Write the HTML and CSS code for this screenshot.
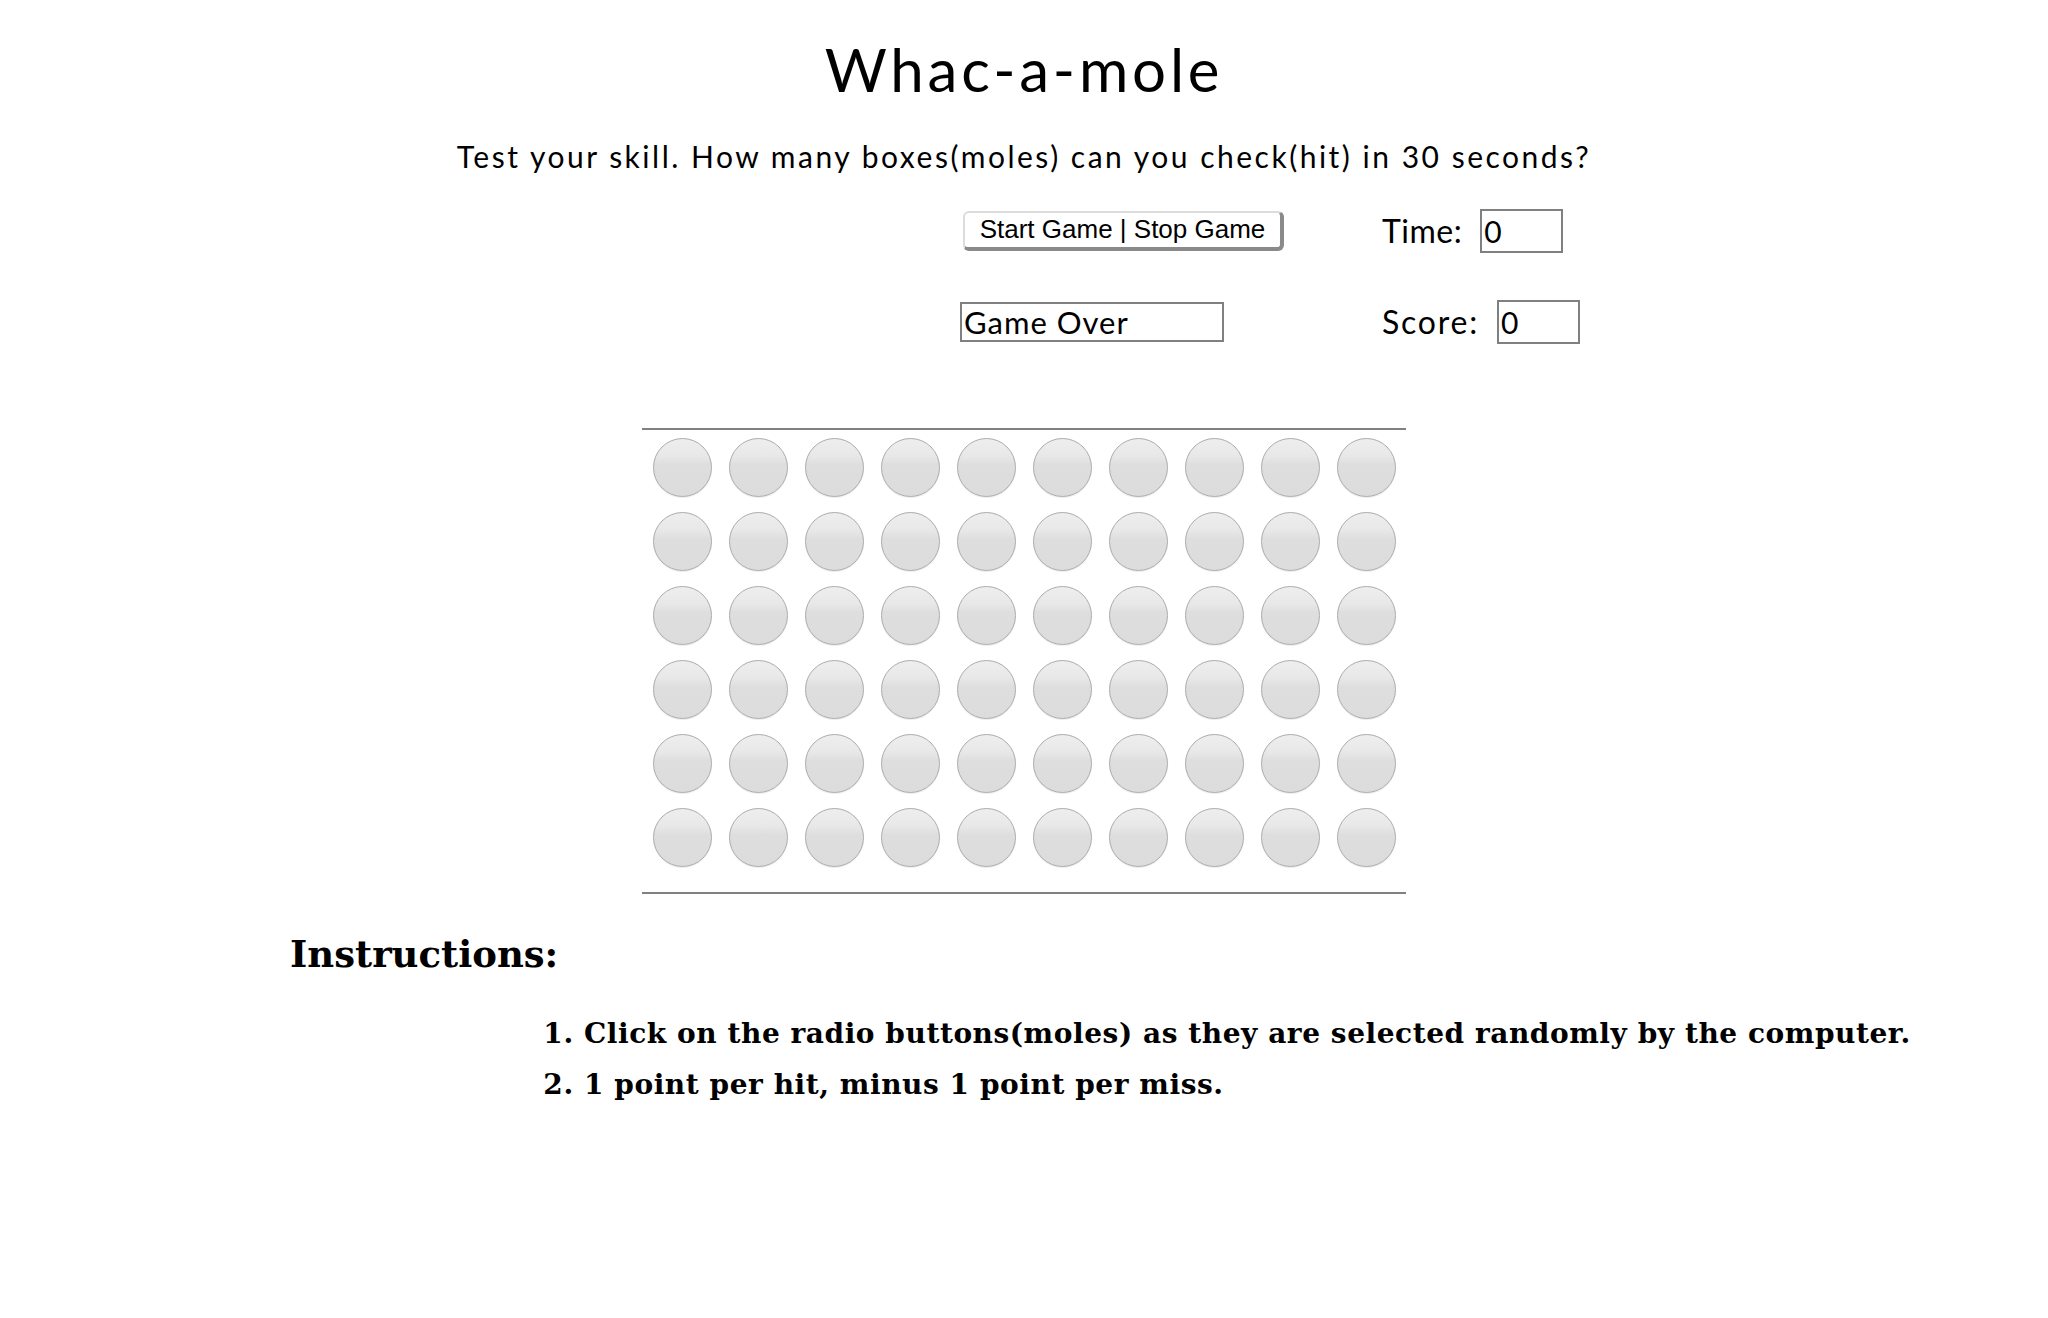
FILE: index.html
```html
<!DOCTYPE html>
<html lang="en">
<head>
<meta charset="utf-8">
<title>Whac-a-mole</title>
<link rel="stylesheet" href="styles.css">
</head>
<body>
<h1 class="title">Whac-a-mole</h1>
<p class="subtitle">Test your skill. How many boxes(moles) can you check(hit) in 30 seconds?</p>
<div class="controls">
  <div class="cell"><button class="start-btn" type="button">Start Game | Stop Game</button></div>
  <div class="cell"><span class="label">Time:</span><input class="num-box" type="text" value="0"></div>
  <div class="cell"><input class="status-box" type="text" value="Game Over"></div>
  <div class="cell"><span class="label label-wide">Score:</span><input class="num-box" type="text" value="0"></div>
</div>
<div class="board" id="board"></div>
<h2 class="inst-title">Instructions:</h2>
<ol class="inst-list">
  <li>Click on the radio buttons(moles) as they are selected randomly by the computer.</li>
  <li>1 point per hit, minus 1 point per miss.</li>
</ol>
<script>
  var board = document.getElementById('board');
  for (var i = 0; i < 60; i++) {
    var c = document.createElement('div');
    c.className = 'hole';
    var r = document.createElement('input');
    r.type = 'radio';
    r.className = 'mole';
    c.appendChild(r);
    board.appendChild(c);
  }
</script>
</body>
</html>
```
FILE: styles.css
```css
html, body {
  margin: 0;
  padding: 0;
  background: #ffffff;
  color: #000000;
}

body {
  font-family: "Century Gothic", "Lato", "Open Sans", sans-serif;
}

.title {
  margin: 33px 0 0 0;
  font-size: 60px;
  font-weight: 400;
  line-height: 72px;
  text-align: center;
  letter-spacing: 3.8px;
}

.subtitle {
  margin: 31px 0 0 0;
  font-size: 30px;
  font-weight: 400;
  line-height: 40px;
  text-align: center;
  letter-spacing: 2.5px;
}

.controls {
  margin: 32px 0 0 960px;
  display: grid;
  grid-template-columns: 422px auto;
  grid-template-rows: 45px 45px;
  row-gap: 46px;
}

.cell {
  display: flex;
  align-items: center;
  gap: 18px;
}

.label {
  font-size: 32px;
  letter-spacing: 0.5px;
}

.label-wide {
  letter-spacing: 1.8px;
}

.start-btn {
  margin-left: 3px;
  width: 321px;
  height: 40px;
  background: #ffffff;
  border-style: solid;
  border-width: 2px 4px 4px 2px;
  border-color: #dcdcdc #8a8a8a #8a8a8a #dcdcdc;
  border-radius: 6px;
  font-family: "Liberation Sans", Arial, sans-serif;
  font-size: 26px;
  color: #000;
  padding: 0;
}

.num-box {
  box-sizing: border-box;
  width: 83px;
  height: 44px;
  border: 2px solid #808080;
  padding: 0 2px;
  font-family: "Century Gothic", "Lato", sans-serif;
  font-size: 30px;
  color: #000;
  background: #fff;
  margin: 0;
}

.status-box {
  box-sizing: border-box;
  width: 264px;
  height: 40px;
  border: 2px solid #808080;
  padding: 0 2px;
  font-family: "Century Gothic", "Lato", sans-serif;
  font-size: 31px;
  letter-spacing: 1px;
  color: #000;
  background: #fff;
  margin: 0;
}

.board {
  width: 760px;
  margin: 84px auto 0 auto;
  padding: 0 2px 18px 2px;
  border-top: 2px solid #808080;
  border-bottom: 2px solid #808080;
  display: grid;
  grid-template-columns: repeat(10, 76px);
  grid-auto-rows: 74px;
}

.hole {
  display: flex;
  align-items: center;
  justify-content: center;
}

.mole {
  appearance: none;
  -webkit-appearance: none;
  box-sizing: border-box;
  width: 59px;
  height: 59px;
  margin: 0;
  border-radius: 50%;
  border: 1.5px solid #ababab;
  background: linear-gradient(#eeeeee 0%, #e8e8e8 30%, #dedede 45%, #dcdcdc 100%);
  box-shadow: 0 1px 1px rgba(0, 0, 0, 0.08);
}

.inst-title {
  margin: 36px 0 0 290px;
  font-family: "DejaVu Serif", Georgia, serif;
  font-weight: 700;
  font-size: 37px;
  line-height: 48px;
}

.inst-list {
  margin: 30px 0 0 584px;
  padding: 0;
  font-family: "DejaVu Serif", Georgia, serif;
  font-weight: 700;
  font-size: 28px;
  letter-spacing: 0.55px;
  line-height: 51px;
}
```
